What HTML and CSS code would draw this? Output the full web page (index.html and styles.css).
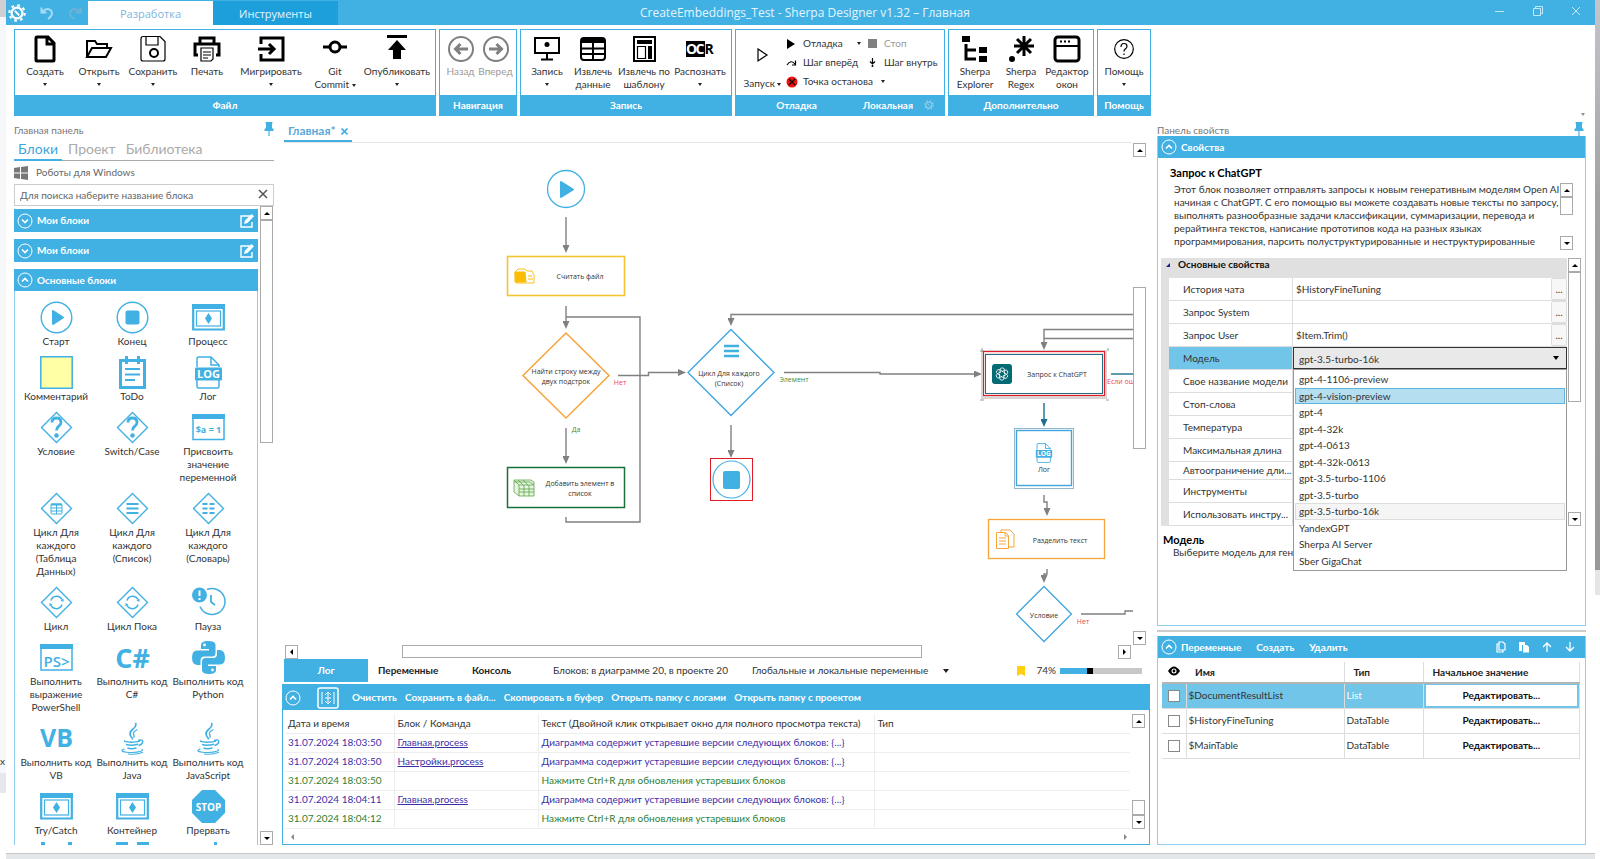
FILE: index.html
```html
<!DOCTYPE html>
<html lang="ru">
<head>
  <meta charset="utf-8">
  <title>CreateEmbeddings_Test - Sherpa Designer</title>
  <link rel="stylesheet" href="styles.css">
</head>
<body>

<!-- icon set -->
<svg class="sprite" aria-hidden="true">
  <symbol id="up" viewBox="0 0 16 16"><circle cx="8" cy="8" r="7" fill="none" stroke="#fff"/><path d="M5 9.500l3-3 3 3" fill="none" stroke="#fff" stroke-width="1.600"/></symbol>
  <symbol id="down" viewBox="0 0 16 16"><circle cx="8" cy="8" r="7" fill="none" stroke="#fff"/><path d="M5 6.500l3 3 3-3" fill="none" stroke="#fff" stroke-width="1.600"/></symbol>
  <symbol id="pin" viewBox="0 0 10 14"><path d="M1.500 0h7v1.500H8v4.500l1.500 1v2H5.600v5H4.400V9H.5V7L2 6V1.500h-.5z" fill="#41b0e3"/></symbol>
  <symbol id="edit" viewBox="0 0 15 14"><path d="M10 2H1v11h11V8" fill="none" stroke="#fff" stroke-width="1.400"/><path d="M4 10l1-3.500L11.500 0 14 2.300 7.500 9z" fill="#fff"/></symbol>
  <symbol id="gear" viewBox="0 0 16 16"><circle cx="8" cy="8" r="4.800" fill="none" stroke="currentColor" stroke-width="2"/><circle cx="8" cy="8" r="6.800" fill="none" stroke="currentColor" stroke-width="2" stroke-dasharray="2.400 2.940"/><path d="M6 6l4 4" stroke="currentColor" stroke-width="1.600"/></symbol>
  <symbol id="play" viewBox="0 0 33 33"><circle cx="16.500" cy="16.500" r="15.300" fill="none" stroke="#41b0e3" stroke-width="1.400"/><path d="M13 10v13l10-6.500z" fill="#41b0e3" stroke="#41b0e3" stroke-width="2" stroke-linejoin="round"/></symbol>
  <symbol id="stop" viewBox="0 0 33 33"><circle cx="16.500" cy="16.500" r="15.300" fill="none" stroke="#41b0e3" stroke-width="1.400"/><rect x="9.500" y="9.500" width="14" height="14" rx="2" fill="#41b0e3"/></symbol>
  <symbol id="process" viewBox="0 0 33 33"><path d="M1.200 4h30.600v24.500H1.200z" fill="none" stroke="#41b0e3" stroke-width="2.200"/><path d="M0 3h33v5H0z" fill="#41b0e3"/><rect x="4.500" y="10" width="24" height="15" fill="none" stroke="#41b0e3" stroke-width="1.200"/><path d="M16.500 12l3.500 5.500-3.500 5.500-3.500-5.500z" fill="#41b0e3"/></symbol>
  <symbol id="log" viewBox="0 0 33 33"><path d="M5 11V2.500Q5 1 6.500 1H19l8 8v2M5 24v6.500Q5 32 6.500 32h19q1.500 0 1.500-1.500V24" fill="none" stroke="#41b0e3" stroke-width="1.500"/><path d="M19 1v8h8" fill="none" stroke="#41b0e3" stroke-width="1.500"/><rect x="3" y="11.500" width="27" height="13" rx="1" fill="#41b0e3"/><text x="16.500" y="22" class="glyph" font-size="11" fill="#fff">LOG</text></symbol>
  <symbol id="rhomb" viewBox="0 0 33 33"><path d="M16.500 1.500l15 15-15 15-15-15z" fill="none" stroke="#41b0e3" stroke-width="1.400"/></symbol>
  <symbol id="question" viewBox="0 0 33 33"><use href="#rhomb"/><path d="M12 11.500q0-4.500 4.500-4.500t4.500 4.300q0 2.500-2.500 4.200-2 1.300-2 4" fill="none" stroke="#41b0e3" stroke-width="2.800"/><circle cx="16.500" cy="24.500" r="2.300" fill="#41b0e3"/></symbol>
  <symbol id="loop" viewBox="0 0 33 33"><use href="#rhomb"/><path d="M11 14.500a6 6 0 0 1 11-1M22 18.500a6 6 0 0 1-11 1" fill="none" stroke="#41b0e3" stroke-width="1.500"/><path d="M23.500 12.500v3.500l-3-1.500zM9.500 20.500V17l3 1.500z" fill="#41b0e3"/></symbol>
  <symbol id="java" viewBox="0 0 33 33"><g fill="none" stroke="#41b0e3"><path d="M19.500 1q1.500 3-3 6.500-4 3.500-1.500 7 1.500 1.500 1.500 3" stroke-width="1.700"/><path d="M21.500 7.500q-4.500 2-4 4.300.7 2 .5 4" stroke-width="1.300"/><path d="M9 18.500q-2 1.500 6 1.700 6 0 9-1M10 22.500q5 1.600 12-.2M11.500 26q4 1.500 9 0M22 18.500q5-1.500 4.800 1.300-.3 2.300-4.300 3.700" stroke-width="1.400"/><path d="M8.500 27q-6 2.200 2 3.200 9 1 15-1.200 2-1 0-2M12 32q9 .8 15-1.700" stroke-width="1.100"/></g></symbol>
</svg>

<div class="edge edge-left"><span>x</span></div>

<div class="window">
  <header class="titlebar">
    <div class="quick">
      <svg width="18" height="18" class="white"><use href="#gear"/></svg>
      <svg width="14" height="14" viewBox="0 0 14 14"><path d="M1.500 1.500v5h5M2 6q5-5 9-1.500 3 4-3 8.500" fill="none" stroke="#a5dcf5" stroke-width="2"/></svg>
      <svg width="14" height="14" viewBox="0 0 14 14"><path d="M12.500 1.500v5h-5M12 6Q7 1 3 4.500 0 8.500 6 13" fill="none" stroke="#6fb2d3" stroke-width="2"/></svg>
    </div>
    <button class="maintab current">Разработка</button>
    <button class="maintab">Инструменты</button>
    <h1>CreateEmbeddings_Test - Sherpa Designer v1.32 – Главная</h1>
    <div class="winbuttons">
      <button aria-label="Свернуть"><svg width="10" height="10" viewBox="0 0 10 10"><path d="M0 5.500h9"/></svg></button>
      <button aria-label="Развернуть"><svg width="10" height="10" viewBox="0 0 10 10"><path d="M.5 2.500h7v7h-7zM2.500 2.500v-2h7v7h-2"/></svg></button>
      <button aria-label="Закрыть"><svg width="10" height="10" viewBox="0 0 10 10"><path d="M1 1l8 8M9 1L1 9"/></svg></button>
    </div>
  </header>

  <nav class="ribbon">
    <section class="group">
      <div class="tools">
        <button class="tool"><svg width="28" height="28" viewBox="0 0 28 28"><path d="M6 2h11l6 6v17q0 1-1 1H6q-1 0-1-1V3q0-1 1-1zM16 2v7h7" class="k3"/></svg>Создать<i class="caret"></i></button>
        <button class="tool"><svg width="28" height="28" viewBox="0 0 28 28"><path d="M2 22V6h8l2 3h10v4M2 22l5-9h19l-5 9z" class="k2"/></svg>Открыть<i class="caret"></i></button>
        <button class="tool"><svg width="28" height="28" viewBox="0 0 28 28"><path d="M4 1.500h17l5 5V24q0 2-2 2H4q-2 0-2-2V4q0-2.500 2-2.500zM7 2v8h12V2" class="k1"/><circle cx="15" cy="18" r="4" class="k2"/></svg>Сохранить<i class="caret"></i></button>
        <button class="tool"><svg width="28" height="28" viewBox="0 0 28 28"><path d="M7 8V3h14v5M5 20H2V9h24v11h-3" class="k3"/><path d="M8 13h12v11l-2 2H8zM10 17h8M10 20h8M10 23h5" class="k1"/></svg>Печать</button>
        <button class="tool wide"><svg width="28" height="28" viewBox="0 0 28 28"><path d="M4 9V3h22v22H4v-6M1 14h15M12 9l5 5-5 5" class="k3"/></svg>Мигрировать<i class="caret"></i></button>
        <button class="tool"><svg width="28" height="28" viewBox="0 0 28 28"><path d="M2 12h7M19 12h7" class="k3"/><circle cx="14" cy="12" r="5" class="k3"/></svg>Git<span>Commit <i class="caret"></i></span></button>
        <button class="tool widest"><svg width="28" height="28" viewBox="0 0 28 28"><path d="M4 0h20v3H4zM14 5l9 10h-5v9h-8v-9H5z"/></svg>Опубликовать<i class="caret"></i></button>
      </div>
      <h2>Файл</h2>
    </section>
    <section class="group">
      <div class="tools">
        <button class="tool nav" disabled><svg width="28" height="28" viewBox="0 0 28 28"><circle cx="14" cy="14" r="12" class="g2"/><path d="M21 14H9M13.500 9l-5 5 5 5" class="g3"/></svg>Назад</button>
        <button class="tool nav" disabled><svg width="28" height="28" viewBox="0 0 28 28"><circle cx="14" cy="14" r="12" class="g2"/><path d="M7 14h12M14.500 9l5 5-5 5" class="g3"/></svg>Вперед</button>
      </div>
      <h2>Навигация</h2>
    </section>
    <section class="group">
      <div class="tools">
        <button class="tool small"><svg width="28" height="28" viewBox="0 0 28 28"><path d="M2 3h24v15H2zM14 18v6M8 24.500h12" class="k2"/><circle cx="14" cy="9.500" r="2.500"/></svg>Запись<i class="caret"></i></button>
        <button class="tool small"><svg width="28" height="28" viewBox="0 0 28 28"><rect x="2" y="3" width="24" height="22" rx="3" class="k2"/><path d="M2 3h24v5H2z"/><path d="M2 13.500h24M2 19h24M14 8v17" class="k2"/></svg>Извлечь<span>данные</span></button>
        <button class="tool mid"><svg width="28" height="28" viewBox="0 0 28 28"><path d="M4 2h21v24H4z" class="k2"/><path d="M7 5h15v4H7zM18 11h4v13h-4z"/><path d="M7.500 11.500h8v12h-8z" class="k1"/></svg>Извлечь по<span>шаблону</span></button>
        <button class="tool mid"><svg width="28" height="28" viewBox="0 0 28 28"><path d="M0 6h19v16H0z"/><text x="5.500" y="19" class="glyph" font-size="14" fill="#fff">O</text><text x="14" y="19" class="glyph" font-size="14" fill="#fff">C</text><text x="23" y="19" class="glyph" font-size="14">R</text></svg>Распознать<i class="caret"></i></button>
      </div>
      <h2>Запись</h2>
    </section>
    <section class="group">
      <div class="tools debug">
        <button class="tool run"><svg width="14" height="16" viewBox="0 0 14 16"><path d="M2 2l9 6-9 6z" class="k1"/></svg><span>Запуск <i class="caret"></i></span></button>
        <div class="steps">
          <button><svg width="12" height="12" viewBox="0 0 12 12"><path d="M1 1l8 5-8 5z"/></svg>Отладка<i class="caret"></i></button>
          <button class="off"><svg width="12" height="12" viewBox="0 0 12 12"><path d="M1 1h9v9H1z" fill="#808080"/></svg>Стоп</button>
          <button><svg width="12" height="12" viewBox="0 0 12 12"><path d="M1 8q4-6 8-1M9.500 3.500V8H6" class="k1"/></svg>Шаг вперёд</button>
          <button><svg width="12" height="12" viewBox="0 0 12 12"><path d="M5.500 1v5M3 4.500l2.500 2.500L8 4.500" class="k1"/><circle cx="5.500" cy="9" r="1"/></svg>Шаг внутрь</button>
          <button class="both"><svg width="12" height="12" viewBox="0 0 12 12"><circle cx="6" cy="6" r="5.500" fill="#f01010"/><path d="M3 3l6 6M9 3L3 9" class="k1"/></svg>Точка останова<i class="caret"></i></button>
        </div>
      </div>
      <h2 class="split"><span>Отладка</span><span>Локальная</span><svg width="10" height="10"><use href="#gear"/></svg></h2>
    </section>
    <section class="group">
      <div class="tools">
        <button class="tool small"><svg width="28" height="28" viewBox="0 0 28 28"><path d="M1 1h8v6H1zM18 12h8v6h-8zM18 21h8v6h-8z"/><path d="M5 9v15h10M5 15h10" class="k3"/></svg>Sherpa<span>Explorer</span></button>
        <button class="tool small"><svg width="28" height="28" viewBox="0 0 28 28"><path d="M17 1v20M7 11h20M10 4l14 14M24 4L10 18" class="k3"/><circle cx="5" cy="24" r="3"/></svg>Sherpa<span>Regex</span></button>
        <button class="tool small"><svg width="28" height="28" viewBox="0 0 28 28"><rect x="2" y="2" width="24" height="24" rx="3" class="k3"/><path d="M2 11h24M7 6.500h2M11 6.500h2M15 6.500h2" class="k2"/></svg>Редактор<span>окон</span></button>
      </div>
      <h2>Дополнительно</h2>
    </section>
    <section class="group">
      <div class="tools">
        <button class="tool small"><svg width="28" height="28" viewBox="0 0 28 28"><circle cx="14" cy="14" r="9.300" class="k1"/><path d="M11 12q0-3.500 3-3.500t3 2.800q0 1.700-1.700 2.700-1.300 1-1.300 2.500M14 18.500v1.500" class="k1"/></svg>Помощь<i class="caret"></i></button>
      </div>
      <h2>Помощь</h2>
    </section>
    <i class="caret more"></i>
  </nav>

  <main class="workspace">
    <aside class="left">
      <div class="panelname">Главная панель<svg width="10" height="14"><use href="#pin"/></svg></div>
      <div class="lefttabs">
        <button class="current">Блоки</button><button>Проект</button><button>Библиотека</button>
      </div>
      <div class="platform"><svg width="14" height="14" viewBox="0 0 14 14"><path d="M0 2l6-1v5.500H0zM7 1l7-1v6.500H7zM0 7.500h6V13l-6-1zM7 7.500h7V14l-7-1z" fill="#777"/></svg>Роботы для Windows</div>
      <div class="search">
        <input type="text" aria-label="Поиск блока" placeholder="Для поиска наберите название блока">
        <button aria-label="Очистить поиск"><svg width="10" height="10" viewBox="0 0 10 10"><path d="M1 1l8 8M9 1L1 9" stroke="#555" stroke-width="1.500"/></svg></button>
      </div>
      <div class="palette">
        <div class="palette-main">
          <div class="bar"><svg width="16" height="16"><use href="#down"/></svg>Мои блоки<svg width="15" height="14" class="end"><use href="#edit"/></svg></div>
          <div class="bar"><svg width="16" height="16"><use href="#down"/></svg>Мои блоки<svg width="15" height="14" class="end"><use href="#edit"/></svg></div>
          <div class="bar open"><svg width="16" height="16"><use href="#up"/></svg>Основные блоки</div>
          <div class="blocks">
            <div class="block"><svg><use href="#play"/></svg>Старт</div>
            <div class="block"><svg><use href="#stop"/></svg>Конец</div>
            <div class="block"><svg><use href="#process"/></svg>Процесс</div>

            <div class="block"><svg viewBox="0 0 33 33"><path d="M.8.800h31.400v31.400H.8z" fill="#ffffa6" stroke="#41b0e3" stroke-width="1.500"/></svg>Комментарий</div>
            <div class="block"><svg viewBox="0 0 33 33"><path d="M4.500 4.500h24v27h-24z" fill="none" stroke="#41b0e3" stroke-width="3"/><path d="M10.500 0v8M22.500 0v8" stroke="#41b0e3" stroke-width="3"/><path d="M9 13h15M9 18.500h15M9 24h10" stroke="#41b0e3" stroke-width="2"/></svg>ToDo</div>
            <div class="block"><svg><use href="#log"/></svg>Лог</div>

            <div class="block"><svg><use href="#question"/></svg>Условие</div>
            <div class="block"><svg><use href="#question"/></svg>Switch/Case</div>
            <div class="block"><svg viewBox="0 0 33 33"><path d="M1 4h31v24.500H1z" fill="none" stroke="#41b0e3" stroke-width="1.500"/><path d="M0 3h33v5H0z" fill="#41b0e3"/><text x="16.500" y="22" class="glyph" font-size="9">$a = 1</text></svg>Присвоить<br>значение<br>переменной</div>

            <div class="block"><svg viewBox="0 0 33 33"><use href="#rhomb"/><rect x="11" y="12" width="11" height="10" rx="1" fill="none" stroke="#41b0e3"/><path d="M11 12.500h11" stroke="#41b0e3" stroke-width="2"/><path d="M11 16h11M11 19h11M16.500 13v9" stroke="#41b0e3"/></svg>Цикл Для<br>каждого<br>(Таблица<br>Данных)</div>
            <div class="block"><svg viewBox="0 0 33 33"><use href="#rhomb"/><path d="M10.500 12h12M10.500 16.500h12M10.500 21h12" stroke="#41b0e3" stroke-width="2"/></svg>Цикл Для<br>каждого<br>(Список)</div>
            <div class="block"><svg viewBox="0 0 33 33"><use href="#rhomb"/><path d="M10.500 12h12M10.500 16.500h12M10.500 21h12" stroke="#41b0e3" stroke-width="2" stroke-dasharray="5 2"/></svg>Цикл Для<br>каждого<br>(Словарь)</div>

            <div class="block"><svg><use href="#loop"/></svg>Цикл</div>
            <div class="block"><svg><use href="#loop"/></svg>Цикл Пока</div>
            <div class="block"><svg viewBox="0 0 33 33"><path d="M15 3.500a13 13 0 1 1-7 17" fill="none" stroke="#41b0e3" stroke-width="1.500"/><path d="M19 9v7l4 3" fill="none" stroke="#41b0e3" stroke-width="1.800"/><circle cx="7.500" cy="9" r="7.500" fill="#41b0e3"/><path d="M7.500 4.500v5.500M7.500 12v2" stroke="#fff" stroke-width="2"/></svg>Пауза</div>

            <div class="block"><svg viewBox="0 0 33 33"><path d="M1 4h31v25H1z" fill="none" stroke="#41b0e3" stroke-width="1.500"/><path d="M0 3h33v5H0z" fill="#41b0e3"/><text x="16.500" y="26" class="glyph mid" font-size="15">PS&gt;</text></svg>Выполнить<br>выражение<br>PowerShell</div>
            <div class="block"><svg viewBox="0 0 33 33"><text x="16.500" y="27" class="glyph" font-size="27">C#</text></svg>Выполнить код<br>C#</div>
            <div class="block"><svg viewBox="0 0 33 33"><path d="M16 0q-7 0-7 4v4h8v1.500H5Q0 9.500 0 16.500T5 24h3.500v-4.500q0-4 4-4H20q3.500 0 3.500-3.500V4q0-4-7.500-4z" fill="#41b0e3"/><path d="M17 33q7 0 7-4v-4h-8v-1.500h12q5 0 5-7T28 9h-3v4q0 4-4 4h-7.500Q10 17 10 20.500V29q0 4 7 4z" fill="#41b0e3"/><circle cx="12.500" cy="4" r="1.400" fill="#fff"/><circle cx="20.500" cy="29" r="1.400" fill="#fff"/></svg>Выполнить код<br>Python</div>

            <div class="block"><svg viewBox="0 0 33 33"><text x="16.500" y="25" class="glyph" font-size="25">VB</text></svg>Выполнить код<br>VB</div>
            <div class="block"><svg><use href="#java"/></svg>Выполнить код<br>Java</div>
            <div class="block"><svg><use href="#java"/></svg>Выполнить код<br>JavaScript</div>

            <div class="block"><svg><use href="#process"/></svg>Try/Catch</div>
            <div class="block"><svg><use href="#process"/></svg>Контейнер</div>
            <div class="block"><svg viewBox="0 0 33 33"><path d="M10 0h13l10 10v13L23 33H10L0 23V10z" fill="#41b0e3"/><text x="16.500" y="20.500" class="glyph" font-size="10" fill="#fff">STOP</text></svg>Прервать</div>

            <div class="block last"><svg viewBox="0 0 33 33"><path d="M1 0h4v3H1zM28 0h4v3h-4z"/></svg></div>
            <div class="block last"><svg viewBox="0 0 33 33"><path d="M0 0h12v3H0zM21 0h12v3H21z"/></svg></div>
            <div class="block last"><svg viewBox="0 0 33 33"><path d="M22 0h3v3h-3z"/></svg></div>
          </div>
        </div>
        <div class="scroll palette-scroll"><button aria-label="Вверх"><i class="tri t-up"></i></button><div class="thumb"></div><button aria-label="Вниз"><i class="tri t-down"></i></button></div>
      </div>
    </aside>

    <section class="center">
      <div class="doctabs"><button>Главная* <svg width="7" height="7" viewBox="0 0 7 7"><path d="M.5.500l6 6M6.500.500l-6 6" stroke="#41b0e3" stroke-width="1.600"/></svg></button></div>
      <div class="canvasrow">
        <svg class="canvas" role="img" aria-label="Диаграмма">
          <defs>
            <marker id="tip" viewBox="0 0 6 6" refX="3" refY="3" markerWidth="8" markerHeight="7" markerUnits="userSpaceOnUse" orient="auto" preserveAspectRatio="none"><path d="M0 0l6 3-6 3z" fill="#808080"/></marker>
            <marker id="tipteal" viewBox="0 0 6 6" refX="3" refY="3" markerWidth="8" markerHeight="7" markerUnits="userSpaceOnUse" orient="auto" preserveAspectRatio="none"><path d="M0 0l6 3-6 3z" fill="#1a6f93"/></marker>
          </defs>
          <g transform="translate(-283 -143)">
            <g class="wire">
              <path d="M566 217v32"/>
              <path d="M566 306v19"/>
              <path class="plain" d="M566 517v5h74V317h-74"/>
              <path d="M618 375.500h30.500v-3H682"/>
              <path d="M566 428v32"/>
              <path d="M1136 314.500H731V322"/>
              <path d="M784 372.500h96v1.500h98"/>
              <path d="M731 425v29"/>
              <path d="M1136 329.500h-92V346"/>
              <path class="plain" d="M1136 338.500h-92"/>
              <path d="M1044 495v7h3v10"/>
              <path d="M1047 569v5h-3v5"/>
              <path class="plain" d="M1081 614h44v-3h11"/>
              <path class="teal" d="M1044 403v20"/>
              <path class="teal plain" d="M1111 374h25"/>
            </g>

            <circle cx="566" cy="189" r="18.500" fill="#fff" stroke="#41b0e3" stroke-width="1.300"/>
            <path d="M561 182v15l12-7.500z" fill="#41b0e3" stroke="#41b0e3" stroke-width="2" stroke-linejoin="round"/>

            <rect x="507.500" y="256.500" width="117" height="39" fill="#fff" stroke="#f5c433" stroke-width="1.600"/>
            <path d="M515 272l3-3h7l2 2h5l2 4v8h-18z" fill="#fff" stroke="#f9c21c"/>
            <path d="M515 272h10l1 10h-11zM528 276h4M528 279h5" fill="#fbbc05" stroke="#fbbc05"/>
            <text x="580" y="279">Считать файл</text>

            <path d="M566 333l43 42.500-43 42.500-43-42.500z" fill="#fff" stroke="#f7a43a" stroke-width="1.500"/>
            <text x="566" y="374">Найти строку между</text>
            <text x="566" y="384">двух подстрок</text>
            <text x="620" y="385" class="no">Нет</text>
            <text x="576" y="432" class="yes">Да</text>

            <rect x="507.500" y="467.500" width="117" height="40" fill="#fff" stroke="#17703a" stroke-width="1.500"/>
            <g fill="#e8f4e2" stroke="#5ba646" stroke-width=".8"><path d="M514 480h17l3 2v14h-15l-5-4z"/><path d="M514 482h16l4 3M514 480l5 5v11M519 485h15M524 485v11M529 485v11M519 489h15M519 492h15M518 480l5 5M523 480l5 5"/></g>
            <text x="580" y="486">Добавить элемент в</text>
            <text x="580" y="496">список</text>

            <path d="M731 329.500l43 43-43 43-43-43z" fill="#fff" stroke="#41a5e0" stroke-width="1.400"/>
            <path d="M724 346h15M724 351h15M724 356h15" stroke="#41b0e3" stroke-width="2.500"/>
            <text x="729" y="376">Цикл Для каждого</text>
            <text x="729" y="386">(Список)</text>
            <text x="794" y="382" class="yes">Элемент</text>

            <rect x="710.500" y="458.500" width="42" height="42" fill="#fff" stroke="#e01b24"/>
            <circle cx="731.500" cy="479.500" r="18.500" fill="none" stroke="#41b0e3" stroke-width="1.200"/>
            <rect x="723" y="471" width="17" height="18" rx="2" fill="#41b0e3"/>

            <rect x="981" y="350" width="126" height="49" fill="#d9d3d5"/>
            <path d="M980 351h4M982 348v4M1108 348v3M980 400h4M1106 400h3" stroke="#999"/>
            <rect x="983.500" y="351.500" width="121" height="44" fill="#fbdcdc" stroke="#e01b24"/>
            <rect x="985.500" y="354.500" width="117" height="39" fill="#fff" stroke="#1f6f87"/>
            <rect x="992" y="364" width="20" height="20" rx="3" fill="#046b75"/>
            <g fill="none" stroke="#fff" stroke-width=".8"><path id="petal" d="M1000 373v-3q0-2 2-2.200 2.500 0 2.500 2.500v4"/><use href="#petal" transform="rotate(60 1002 374)"/><use href="#petal" transform="rotate(120 1002 374)"/><use href="#petal" transform="rotate(180 1002 374)"/><use href="#petal" transform="rotate(240 1002 374)"/><use href="#petal" transform="rotate(300 1002 374)"/></g>
            <text x="1057" y="377">Запрос к ChatGPT</text>
            <text x="1107" y="384" class="no start">Если ошибка</text>

            <rect x="1014.500" y="428.500" width="59" height="60" fill="none" stroke="#2f6f92" stroke-dasharray="1 1"/>
            <rect x="1016.500" y="430.500" width="55" height="55" fill="#fff" stroke="#41a5e0" stroke-width="1.400"/>
            <use href="#log" x="1034" y="443" width="20" height="20"/>
            <text x="1044" y="472">Лог</text>

            <rect x="988.500" y="519.500" width="116" height="39" fill="#fff" stroke="#f7a43a" stroke-width="1.300"/>
            <g fill="#fff" stroke="#f7a43a"><path d="M1001 530h9l4 4v13h-13z"/><path d="M996.500 532.500h9l3 3v13h-12z"/><path d="M999 538h7M999 541h7M999 544h7M1005 533v3h3"/></g>
            <text x="1060" y="543">Разделить текст</text>

            <path d="M1044 586.500l27.500 27.500-27.500 27.500-27.500-27.500z" fill="#fff" stroke="#41a5e0" stroke-width="1.300"/>
            <text x="1044" y="618">Условие</text>
            <text x="1083" y="624" class="no">Нет</text>
          </g>
        </svg>
        <div class="scroll canvas-v"><button aria-label="Вверх"><i class="tri t-up"></i></button><div class="thumb"></div><button aria-label="Вниз"><i class="tri t-down"></i></button></div>
      </div>
      <div class="scroll-h"><button aria-label="Влево"><i class="tri t-left"></i></button><div class="thumb"></div><button aria-label="Вправо"><i class="tri t-right"></i></button></div>

      <div class="infobar">
        <button class="current">Лог</button>
        <button>Переменные</button>
        <button>Консоль</button>
        <span class="count">Блоков: в диаграмме 20, в проекте 20</span>
        <span class="scope">Глобальные и локальные переменные <i class="caret big"></i></span>
        <svg width="8" height="10" viewBox="0 0 8 10"><path d="M0 0h8v10L4 8l-4 2z" fill="#ffcf10"/></svg>
        <label for="zoom">74%</label>
        <input type="range" id="zoom" min="0" max="100" value="35">
      </div>

      <div class="logpanel">
        <div class="logbar">
          <svg width="16" height="16"><use href="#up"/></svg>
          <svg width="22" height="22" viewBox="0 0 22 22" class="fit"><rect x="1" y="1" width="20" height="20" rx="2" fill="none" stroke="#fff" stroke-width="1.500"/><path d="M5 5v12M17 5v12M11 5v12M8 8l3-3 3 3M8 14l3 3 3-3M8 11h6" fill="none" stroke="#fff"/></svg>
          <button>Очистить</button><button>Сохранить в файл...</button><button>Скопировать в буфер</button><button>Открыть папку с логами</button><button>Открыть папку с проектом</button>
        </div>
        <div class="logbody">
          <table class="log">
            <thead><tr><th>Дата и время</th><th>Блок / Команда</th><th>Текст (Двойной клик открывает окно для полного просмотра текста)</th><th>Тип</th></tr></thead>
            <tbody>
              <tr><td>31.07.2024 18:03:50</td><td><a href="#">Главная.process</a></td><td>Диаграмма содержит устаревшие версии следующих блоков: {...}</td><td></td></tr>
              <tr><td>31.07.2024 18:03:50</td><td><a href="#">Настройки.process</a></td><td>Диаграмма содержит устаревшие версии следующих блоков: {...}</td><td></td></tr>
              <tr class="hint"><td>31.07.2024 18:03:50</td><td></td><td>Нажмите Ctrl+R для обновления устаревших блоков</td><td></td></tr>
              <tr><td>31.07.2024 18:04:11</td><td><a href="#">Главная.process</a></td><td>Диаграмма содержит устаревшие версии следующих блоков: {...}</td><td></td></tr>
              <tr class="hint"><td>31.07.2024 18:04:12</td><td></td><td>Нажмите Ctrl+R для обновления устаревших блоков</td><td></td></tr>
            </tbody>
          </table>
          <div class="scroll log-v"><button aria-label="Вверх"><i class="tri t-up"></i></button><div class="thumb"></div><button aria-label="Вниз"><i class="tri t-down"></i></button></div>
        </div>
        <div class="logfoot"><i class="tri t-left gray"></i><i class="tri t-right gray"></i></div>
      </div>
    </section>

    <aside class="right">
      <div class="panelname">Панель свойств<svg width="10" height="14"><use href="#pin"/></svg></div>
      <div class="props">
        <div class="bar open"><svg width="16" height="16"><use href="#up"/></svg>Свойства</div>
        <h3>Запрос к ChatGPT</h3>
        <div class="about">
          <p>Этот блок позволяет отправлять запросы к новым генеративным моделям Open AI<br>начиная с ChatGPT. С его помощью вы можете создавать новые тексты по запросу,<br>выполнять разнообразные задачи классификации, суммаризации, перевода и<br>рерайтинга текстов, написание прототипов кода на разных языках<br>программирования, парсить полуструктурированные и неструктурированные</p>
          <div class="scroll about-v"><button aria-label="Вверх"><i class="tri t-up"></i></button><div class="thumb"></div><button aria-label="Вниз"><i class="tri t-down"></i></button></div>
        </div>
        <div class="gridwrap">
          <div class="grid">
            <div class="gridhead"><i></i>Основные свойства</div>
            <div class="gridrow"><label for="p1">История чата</label><input id="p1" type="text" value="$HistoryFineTuning"><button>...</button></div>
            <div class="gridrow"><label for="p2">Запрос System</label><input id="p2" type="text"><button>...</button></div>
            <div class="gridrow"><label for="p3">Запрос User</label><input id="p3" type="text" value="$Item.Trim()"><button>...</button></div>
            <div class="gridrow selected"><label for="model">Модель</label>
              <div class="combo">
                <select id="model"><option>gpt-3.5-turbo-16k</option></select>
                <ul>
                  <li>gpt-4-1106-preview</li>
                  <li class="hover">gpt-4-vision-preview</li>
                  <li>gpt-4</li>
                  <li>gpt-4-32k</li>
                  <li>gpt-4-0613</li>
                  <li>gpt-4-32k-0613</li>
                  <li>gpt-3.5-turbo-1106</li>
                  <li>gpt-3.5-turbo</li>
                  <li class="picked">gpt-3.5-turbo-16k</li>
                  <li>YandexGPT</li>
                  <li>Sherpa AI Server</li>
                  <li>Sber GigaChat</li>
                </ul>
              </div>
            </div>
            <div class="gridrow"><span>Свое название модели</span></div>
            <div class="gridrow"><span>Стоп-слова</span></div>
            <div class="gridrow"><span>Температура</span></div>
            <div class="gridrow"><span>Максимальная длина</span></div>
            <div class="gridrow low"><span>Автоограничение дли...</span></div>
            <div class="gridrow"><span>Инструменты</span></div>
            <div class="gridrow"><span>Использовать инстру...</span></div>
          </div>
          <div class="scroll grid-v"><button aria-label="Вверх"><i class="tri t-up"></i></button><div class="thumb"></div><button aria-label="Вниз"><i class="tri t-down"></i></button></div>
        </div>
        <h4>Модель</h4>
        <p class="help">Выберите модель для гене</p>
      </div>
      <div class="splitter"></div>
      <div class="vars">
        <div class="bar open">
          <svg width="16" height="16"><use href="#up"/></svg>Переменные
          <button>Создать</button><button>Удалить</button>
          <div class="varicons">
            <svg viewBox="0 0 12 12"><path d="M4 1h4l2 2v6H4zM4 3H2v8h6V9" fill="none" stroke="#fff" stroke-width="1.200"/></svg>
            <svg viewBox="0 0 12 12"><path d="M1 1h6v3H4v6H1zM5 4h4l2 2v5.500H5z" fill="#fff"/></svg>
            <svg viewBox="0 0 12 12"><path d="M6 11V2M2 6l4-4 4 4" fill="none" stroke="#fff" stroke-width="1.300"/></svg>
            <svg viewBox="0 0 12 12"><path d="M6 1v9M2 6l4 4 4-4" fill="none" stroke="#fff" stroke-width="1.300"/></svg>
          </div>
        </div>
        <table class="vartable">
          <thead><tr><th><svg width="12" height="10" viewBox="0 0 12 10"><path d="M0 5q6-9 12 0-6 9-12 0z"/><circle cx="6" cy="5" r="2.500" fill="#fff"/><circle cx="6" cy="5" r="1.400"/></svg></th><th>Имя</th><th>Тип</th><th>Начальное значение</th></tr></thead>
          <tbody>
            <tr class="selected"><td><input type="checkbox" aria-label="$DocumentResultList"></td><td>$DocumentResultList</td><td>List</td><td><button>Редактировать...</button></td></tr>
            <tr><td><input type="checkbox" aria-label="$HistoryFineTuning"></td><td>$HistoryFineTuning</td><td>DataTable</td><td><button>Редактировать...</button></td></tr>
            <tr><td><input type="checkbox" aria-label="$MainTable"></td><td>$MainTable</td><td>DataTable</td><td><button>Редактировать...</button></td></tr>
          </tbody>
        </table>
      </div>
    </aside>
  </main>
  <footer class="bottom"></footer>
</div>

<div class="edge edge-right"></div>

</body>
</html>
```

FILE: styles.css
```css
* {
  box-sizing: border-box;
}
html, body {
  height: 100%;
  margin: 0;
}
body {
  display: flex;
  overflow: hidden;
  background: #fff;
  color: #333;
  font-family: Lato, "Open Sans", sans-serif;
  font-size: 10px;
  line-height: 13px;
}
button, input, select {
  margin: 0;
  padding: 0;
  border: 0;
  background: none;
  color: inherit;
  font: inherit;
}
h1, h2, h3, h4, p, ul {
  margin: 0;
  padding: 0;
  font-weight: normal;
}
svg {
  flex: none;
}
.sprite {
  position: absolute;
  width: 0;
  height: 0;
}
.glyph {
  font-family: "Open Sans", "Noto Sans", sans-serif;
  font-weight: 700;
  text-anchor: middle;
}
.glyph.mid {
  font-weight: 600;
}

/* strips of the desktop around the window */
.edge-left {
  width: 6px;
  padding-top: 755px;
  overflow: hidden;
  background: linear-gradient(#d0d0d2 17px, #f6f7f9 17px, #f6f7f9 773px, #e6e6ef 773px, #e6e6ef 793px, #fff 793px);
}
.edge-right {
  width: 5px;
  background: linear-gradient(#c4c4ca, #a2a2a5 200px, #98989a 570px, #e6e6e9 570px, #e6e6e9 595px, #fff 595px);
}
.window {
  flex: 1;
  min-width: 0;
  display: flex;
  flex-direction: column;
}

/* title bar */
.titlebar {
  display: flex;
  height: 25px;
  background: #41b0e3;
  color: #e4f5fd;
  font-family: "Open Sans", "Noto Sans", sans-serif;
}
.quick {
  display: flex;
  align-items: center;
  gap: 14px;
  width: 82px;
  padding-left: 2px;
}
.white {
  color: #fff;
}
.maintab {
  width: 125px;
  margin-top: 1px;
  background: #1d9fdb;
  font-size: 11px;
}
.maintab.current {
  background: #fff;
  color: #7db6e0;
}
.titlebar h1 {
  flex: 1;
  padding-left: 302px;
  font-size: 12px;
  line-height: 25px;
}
.winbuttons {
  display: flex;
  gap: 28px;
  padding-right: 14px;
}
.winbuttons path {
  fill: none;
  stroke: #c5e8f8;
}

/* ribbon */
.ribbon {
  display: flex;
  gap: 3px;
  padding: 4px 10px 4px 8px;
}
.group {
  display: flex;
  flex-direction: column;
  border: 1px solid #41b0e3;
}
.tools {
  display: flex;
  height: 65px;
  padding: 5px 3px 0;
}
.tool {
  display: flex;
  flex-direction: column;
  align-items: center;
  width: 54px;
  white-space: nowrap;
}
.tool svg {
  margin-bottom: 2px;
}
.tool.wide {
  width: 74px;
}
.tool.widest {
  width: 70px;
}
.tool.nav {
  width: 35px;
  color: #999;
}
.tool.small {
  width: 46px;
}
.tool.mid {
  width: 56px;
}
.tool.run {
  width: 47px;
  padding-top: 13px;
}
.tool.run svg {
  margin-bottom: 14px;
}
.k1, .k2, .k3 {
  fill: none;
  stroke: #000;
}
.k1 {
  stroke-width: 1.2;
}
.k2 {
  stroke-width: 2;
}
.k3 {
  stroke-width: 3;
}
.g2, .g3 {
  fill: none;
  stroke: #808080;
  stroke-width: 2;
}
.g3 {
  stroke-width: 3;
}
.caret {
  display: inline-block;
  border: 2px solid transparent;
  border-top: 3px solid #222;
  border-bottom: 0;
  vertical-align: middle;
}
.tool > .caret {
  margin-top: 5px;
}
.caret.big {
  margin-left: 12px;
  border-width: 4px 3px 0;
}
.caret.more {
  align-self: flex-end;
  margin-left: auto;
  opacity: .5;
}
.group h2 {
  height: 20px;
  background: #41b0e3;
  color: #fff;
  font-size: 10px;
  font-weight: 700;
  line-height: 20px;
  text-align: center;
}
.group h2.split {
  display: flex;
  align-items: center;
  justify-content: flex-end;
  padding-right: 10px;
}
.split span:first-child {
  margin-right: 46px;
}
.split svg {
  margin-left: 11px;
  color: #8ccbec;
}
.debug {
  padding-top: 4px;
}
.steps {
  display: grid;
  grid-template-columns: 81px 74px;
  grid-template-rows: 19px 19px 19px;
}
.steps button {
  display: flex;
  align-items: center;
  gap: 5px;
  white-space: nowrap;
}
.steps .caret {
  margin-left: auto;
  margin-right: 6px;
}
.steps .both {
  grid-column: span 2;
}
.steps .both .caret {
  margin-left: 3px;
}
.steps .off {
  color: #999;
}

/* working area */
.workspace {
  flex: 1;
  min-height: 0;
  display: flex;
  gap: 7px;
  padding: 0 9px 8px 8px;
}
.left {
  display: flex;
  flex-direction: column;
  width: 260px;
  margin-right: 1px;
}
.panelname {
  display: flex;
  justify-content: space-between;
  height: 17px;
  padding: 2px 2px 0 0;
  color: #777;
  line-height: 17px;
}
.left .panelname {
  padding-right: 0;
}
.lefttabs {
  display: flex;
  height: 24px;
  border-bottom: 1px solid #aaa;
}
.lefttabs button {
  height: 24px;
  margin-right: 2px;
  padding: 0 4px;
  border-bottom: 2px solid transparent;
  color: #aaa;
  font-size: 14px;
}
.lefttabs .current {
  border-color: #41b0e3;
  color: #41a5dc;
}
.platform {
  display: flex;
  align-items: center;
  gap: 8px;
  height: 23px;
  color: #666;
}
.search {
  display: flex;
  align-items: center;
  height: 22px;
  padding: 0 5px;
  border: 1px solid #ccc;
}
.search input {
  flex: 1;
}
.search input::placeholder {
  color: #666;
}
.palette {
  flex: 1;
  min-height: 0;
  display: flex;
  gap: 2px;
  padding-right: 1px;
}
.palette-main {
  flex: 1;
  display: flex;
  flex-direction: column;
  padding-top: 3px;
}
.bar {
  display: flex;
  align-items: center;
  gap: 4px;
  flex: none;
  height: 23px;
  margin-bottom: 7px;
  padding: 0 3px;
  background: #41b0e3;
  color: #fff;
  font-weight: 700;
}
.bar.open {
  height: 22px;
  margin-bottom: 0;
}
.bar .end {
  margin-left: auto;
}
.blocks {
  flex: 1;
  min-height: 0;
  overflow: hidden;
  display: grid;
  grid-template-columns: repeat(3, 76px);
  justify-content: start;
  align-content: start;
  row-gap: 8px;
  padding: 10px 0 0 3px;
  border: 1px solid #8fcdee;
  border-top: 0;
  border-bottom: 0;
}
.block {
  text-align: center;
  white-space: nowrap;
}
.block svg {
  display: block;
  width: 33px;
  height: 33px;
  margin: 0 auto 1px;
  overflow: visible;
  fill: #41b0e3;
}
.block.last {
  margin-top: -3px;
}

/* scroll bars */
.scroll {
  display: flex;
  flex-direction: column;
  flex: none;
  width: 13px;
}
.scroll button, .scroll-h button {
  display: flex;
  flex: none;
  align-items: center;
  justify-content: center;
  width: 13px;
  height: 14px;
  border: 1px solid #aaa;
  background: #fff;
}
.scroll button:last-child, .scroll-h button:last-child {
  margin-top: auto;
}
.thumb {
  flex: none;
  border: 1px solid #aaa;
  background: #fff;
}
.tri {
  border: 3px solid transparent;
}
.t-up {
  border-top: 0;
  border-bottom-color: #000;
}
.t-down {
  border-bottom: 0;
  border-top-color: #000;
}
.t-left {
  border-left: 0;
  border-right-color: #000;
}
.t-right {
  border-right: 0;
  border-left-color: #000;
}
.t-left.gray {
  border-right-color: #888;
}
.t-right.gray {
  border-left-color: #888;
}
.palette-scroll .thumb {
  height: 223px;
}
.canvas-v .thumb {
  height: 162px;
  margin-top: 130px;
}
.log-v .thumb {
  height: 15px;
  margin-top: auto;
}
.log-v button:last-child {
  margin-top: 0;
}
.about-v .thumb {
  height: 18px;
}
.grid-v .thumb {
  height: 130px;
}

/* diagram */
.center {
  flex: 1;
  min-width: 0;
  display: flex;
  flex-direction: column;
}
.doctabs {
  height: 23px;
  margin: 0 18px 0 2px;
  border-bottom: 1px solid #e6e6e6;
}
.doctabs button {
  height: 22px;
  padding: 0 4px;
  border-bottom: 2px solid #41b0e3;
  color: #5aa9dc;
  font-size: 12px;
  font-weight: 700;
}
.doctabs svg {
  margin-left: 2px;
}
.canvasrow {
  flex: 1;
  min-height: 0;
  display: flex;
  padding: 0 4px 0 1px;
}
.canvas {
  flex: 1;
  min-width: 0;
  height: 100%;
  overflow: hidden;
  font-family: "Open Sans", "Noto Sans", sans-serif;
}
.canvas text {
  fill: #333;
  font-size: 7px;
  text-anchor: middle;
}
.canvas .no {
  fill: #f0424e;
}
.canvas .yes {
  fill: #3c8a3c;
}
.canvas .start {
  text-anchor: start;
}
.wire path {
  fill: none;
  stroke: #808080;
  stroke-width: 1.4;
  marker-end: url(#tip);
}
.wire .teal {
  stroke: #1a6f93;
  marker-end: url(#tipteal);
}
.wire .plain {
  marker-end: none;
}
.scroll-h {
  display: flex;
  height: 14px;
  padding: 0 19px 0 3px;
}
.scroll-h .thumb {
  width: 520px;
  height: 13px;
  margin-left: 104px;
}
.scroll-h button:last-child {
  margin-top: 0;
  margin-left: auto;
}
.infobar {
  display: flex;
  align-items: center;
  height: 25px;
  padding: 0 8px 2px 2px;
  white-space: nowrap;
}
.infobar button {
  width: 94px;
  height: 23px;
  padding-left: 10px;
  color: #222;
  font-weight: 700;
  text-align: left;
}
.infobar .current {
  width: 84px;
  padding: 0;
  background: #41b0e3;
  color: #fff;
  text-align: center;
}
.infobar button:nth-child(3) {
  width: 91px;
}
.scope {
  margin-left: 24px;
}
.infobar svg {
  margin-left: auto;
}
.infobar label {
  margin: 0 4px 0 11px;
}
#zoom {
  width: 82px;
  height: 6px;
  appearance: none;
  background: linear-gradient(90deg, #41b0e3 35%, #c8c8c8 35%);
}
#zoom::-webkit-slider-thumb {
  width: 6px;
  height: 6px;
  appearance: none;
  background: #000;
}

/* log */
.logpanel {
  display: flex;
  flex-direction: column;
  height: 161px;
  border: 1px solid #41b0e3;
}
.logbar {
  display: flex;
  align-items: center;
  flex: none;
  height: 25px;
  padding-left: 2px;
  background: #41b0e3;
  color: #fff;
  font-weight: 700;
  white-space: nowrap;
}
.logbar .fit {
  margin: 0 13px 0 16px;
}
.logbar button {
  margin-right: 8px;
}
.logbody {
  flex: 1;
  display: flex;
  gap: 2px;
  padding: 4px 4px 0 2px;
}
table {
  border-collapse: collapse;
  table-layout: fixed;
  text-align: left;
}
.log {
  flex: 1;
  align-self: flex-start;
  width: 100%;
}
.log th, .log td {
  height: 19px;
  padding: 0 3px;
  border-right: 1px solid #eee;
  border-bottom: 1px solid #eee;
  font-weight: normal;
  white-space: nowrap;
}
.log th:last-child, .log td:last-child {
  border-right: 0;
}
.log th:nth-child(1) {
  width: 109px;
}
.log th:nth-child(2) {
  width: 144px;
}
.log th:nth-child(3) {
  width: 336px;
}
.log td, .log a {
  color: #3b2fa8;
}
.log .hint td {
  color: #2f8030;
}
.logfoot {
  display: flex;
  justify-content: space-between;
  align-items: center;
  height: 15px;
  padding: 0 22px 0 8px;
}

/* properties */
.right {
  display: flex;
  flex-direction: column;
  width: 429px;
}
.right .panelname {
  height: 16px;
}
.props {
  display: flex;
  flex-direction: column;
  flex: 1;
  min-height: 0;
  border: 1px solid #8fcdee;
  border-top: 0;
}
.props h3 {
  padding: 8px 12px 4px;
  color: #000;
  font-size: 11px;
  font-weight: 700;
}
.about {
  display: flex;
  justify-content: space-between;
  height: 67px;
  padding: 0 12px 0 16px;
}
.about p {
  white-space: nowrap;
}
.gridwrap {
  display: flex;
  gap: 1px;
  height: 268px;
  margin-top: 8px;
  padding: 0 4px 0 3px;
}
.grid {
  flex: 1;
  padding-left: 8px;
  background: #e0e0e0;
}
.gridhead {
  display: flex;
  align-items: center;
  gap: 8px;
  height: 20px;
  margin-left: -3px;
  padding-bottom: 7px;
  color: #111;
  font-weight: 700;
}
.gridhead i {
  border-left: 4px solid transparent;
  border-bottom: 4px solid #1b1b8c;
}
.gridrow {
  display: flex;
  height: 23px;
  border-bottom: 1px solid #ddd;
  background: #fff;
  line-height: 23px;
}
.gridrow.low {
  height: 18px;
  line-height: 16px;
}
.gridrow label, .gridrow span {
  width: 124px;
  padding-left: 14px;
  border-right: 1px solid #ddd;
  white-space: nowrap;
}
.gridrow > input {
  flex: 1;
  min-width: 0;
  padding-left: 3px;
}
.gridrow > button {
  width: 16px;
  border: 1px solid #ddd;
  border-radius: 2px;
  background: #f7f7f7;
  line-height: 13px;
}
.gridrow.selected label {
  background: #71c5e8;
}
.combo {
  position: relative;
  flex: 1;
}
.combo::after {
  content: "";
  position: absolute;
  top: 9px;
  right: 8px;
  border: 3px solid transparent;
  border-top: 4px solid #000;
  border-bottom: 0;
}
.combo select {
  width: 100%;
  height: 22px;
  padding-left: 5px;
  border: 1px solid #333;
  background: #e9e9e9;
  appearance: none;
}
.combo ul {
  position: absolute;
  top: 22px;
  left: 0;
  right: 0;
  z-index: 2;
  display: flex;
  flex-direction: column;
  height: 202px;
  padding: 1px;
  border: 1px solid #999;
  background: #fff;
  list-style: none;
}
.combo li {
  flex: 1;
  padding-left: 3px;
  border: 1px solid transparent;
  line-height: 14px;
}
.combo .hover {
  border-color: #5fb6e0;
  background: #b6def1;
}
.combo .picked {
  border-color: #ddd;
  background: #f5f5f5;
}
.props h4 {
  padding: 7px 5px 0;
  color: #000;
  font-size: 11px;
  font-weight: 700;
}
.props .help {
  padding-left: 15px;
}
.splitter {
  height: 2px;
  margin: 4px 0;
  background: #ccc;
}

/* variables */
.vars {
  height: 209px;
  border: 1px solid #8fcdee;
  border-top: 0;
}
.vars .bar button {
  margin-left: 11px;
}
.varicons {
  display: flex;
  gap: 11px;
  margin-left: auto;
  padding-right: 6px;
}
.varicons svg {
  width: 12px;
  height: 12px;
}
.vartable {
  width: calc(100% - 9px);
  margin: 4px 5px 0 4px;
}
.vartable th, .vartable td {
  height: 25px;
  padding: 0 2px;
  border: 1px solid #ddd;
  border-left: 0;
}
.vartable th {
  height: 21px;
  padding-left: 9px;
  border-top: 0;
  border-bottom: 2px solid #b5b5b5;
  color: #222;
  font-weight: 700;
}
.vartable th:nth-child(1) {
  width: 24px;
  padding-left: 6px;
  border-right: 0;
}
.vartable th:nth-child(2) {
  width: 158px;
}
.vartable th:nth-child(3) {
  width: 79px;
}
.vartable td:first-child {
  padding-left: 6px;
}
.vartable input {
  display: block;
  width: 12px;
  height: 12px;
  border: 1px solid #888;
  background: #fff;
  appearance: none;
}
.vartable td button {
  display: block;
  width: 100%;
  height: 21px;
  color: #111;
  font-weight: 700;
}
.vartable .selected td {
  background: #71c5e8;
}
.vartable .selected td:nth-child(3) {
  color: #fff;
}
.vartable .selected button {
  background: #fff;
}

.bottom {
  height: 6px;
  border-top: 1px solid #c8c8c8;
  background: #e4e7ea;
}
```
